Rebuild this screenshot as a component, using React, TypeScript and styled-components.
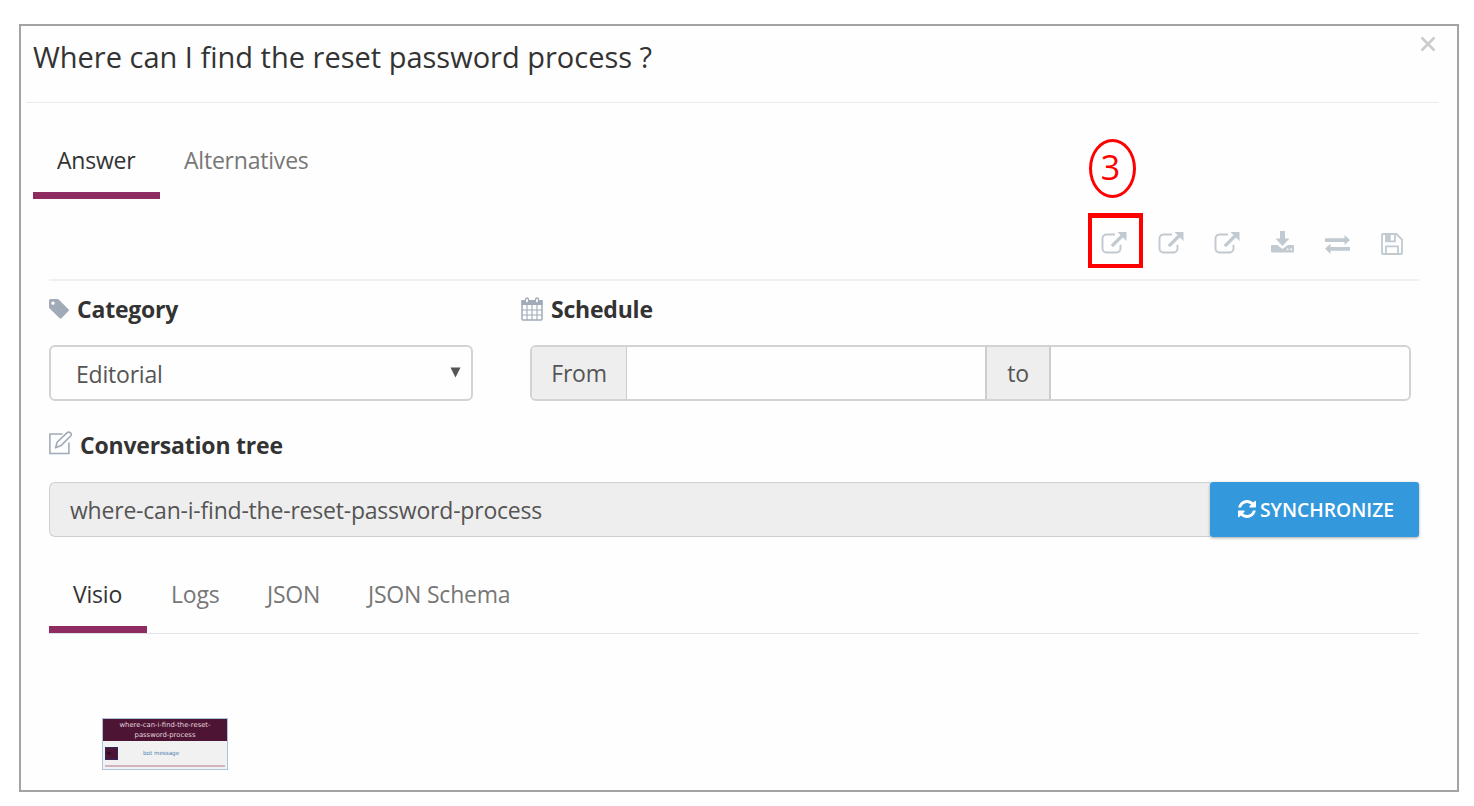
import React from "react";
import styled, { createGlobalStyle } from "styled-components";

const GlobalStyle = createGlobalStyle`
  *, *::before, *::after { box-sizing: border-box; }
  body { margin: 0; background: #fff; font-family: "Open Sans", sans-serif; color: #555; }
`;

const Page = styled.main`
  height: 806px;
  padding: 24px 15px 14px 19px;
  overflow: hidden;
`;

const Dialog = styled.section`
  height: 768px;
  border: 2px solid #a3a3a3;
  background: #fefefe;
`;

const Header = styled.header`
  display: flex;
  justify-content: space-between;
  align-items: flex-start;
  height: 77px;
  margin: 0 18px 0 5px;
  padding: 10px 3px 0 7px;
  border-bottom: 1px solid #ebebeb;
`;

const Title = styled.h1`
  margin: 0;
  font-size: 29px;
  font-weight: 400;
  line-height: 42px;
  color: #333;
  white-space: nowrap;
`;

const CloseButton = styled.button`
  display: flex;
  padding: 0;
  border: 0;
  background: none;
`;

const Body = styled.div`
  padding: 0 38px 0 28px;
  font-size: 23px;
  letter-spacing: -0.21px;
`;

const TabList = styled.nav<{ $main?: boolean }>`
  display: flex;
  align-items: flex-end;
  height: ${(p) => (p.$main ? "96px" : "97px")};
  margin-left: ${(p) => (p.$main ? "-16px" : "0")};
  border-bottom: ${(p) => (p.$main ? "0" : "1px solid #dfe4e9")};
  line-height: ${(p) => (p.$main ? "45px" : "44px")};
`;

const Tab = styled.a<{ $active?: boolean; $width: number }>`
  width: ${(p) => p.$width}px;
  height: 61px;
  padding-left: 24px;
  border-bottom: 7px solid ${(p) => (p.$active ? "#8e2c61" : "transparent")};
  white-space: nowrap;
  color: ${(p) => (p.$active ? "#333" : "#777")};
`;

const Toolbar = styled.div`
  display: flex;
  align-items: flex-start;
  height: 82px;
  padding: 14px 0 0 1039px;
  border-bottom: 2px solid #f0f0f0;
  color: #c1cad0;
`;

const Tool = styled.button<{ $width: number; $top?: number }>`
  display: flex;
  align-items: center;
  justify-content: center;
  flex: none;
  width: ${(p) => p.$width}px;
  height: 55px;
  padding: ${(p) => p.$top ?? 4}px 1px 0 0;
  border: 0;
  background: none;
  color: inherit;
`;

const Highlighted = styled(Tool)`
  position: relative;
  padding-right: 3px;
  border: solid #fe0000;
  border-width: 5px 4px 4px;
`;

const StepBadge = styled.span`
  position: absolute;
  left: -3px;
  top: -79px;
  width: 47px;
  height: 59px;
  padding-right: 4px;
  border: 3px solid #fe0000;
  border-radius: 50%;
  font: 500 34px/51px "Open Sans", sans-serif;
  text-align: center;
  color: #fe0000;
`;

const FieldRow = styled.div`
  display: flex;
`;

const Field = styled.div<{ $width: number }>`
  width: ${(p) => p.$width}px;
`;

const Label = styled.div`
  display: flex;
  align-items: center;
  gap: 8px;
  height: 64px;
  padding-bottom: 8px;
  font-weight: 700;
  line-height: 32px;
  color: #333;
  white-space: nowrap;
  svg { flex: none; }
`;

const TreeLabel = styled(Label)`
  gap: 7px;
  height: 81px;
  padding: 6px 0 0;
  svg { margin-bottom: 3px; }
`;

const Select = styled.div`
  display: flex;
  align-items: center;
  justify-content: space-between;
  width: 424px;
  height: 56px;
  padding: 2px 10px 0 25px;
  border: 2px solid #d3d3d3;
  border-radius: 6px;
  svg { margin-bottom: 4px; }
`;

const InputGroup = styled.div`
  display: flex;
  width: 881px;
  height: 56px;
  margin-left: 9px;
  border: 2px solid #d3d3d3;
  border-radius: 6px;
  overflow: hidden;
`;

const Addon = styled.span<{ $width: number; $between?: boolean }>`
  display: flex;
  align-items: center;
  justify-content: center;
  width: ${(p) => p.$width}px;
  border: solid #cdcdcd;
  border-width: ${(p) => (p.$between ? "0 2px" : "0 1px 0 0")};
  background: #eee;
`;

const Input = styled.input`
  flex: 1;
  min-width: 0;
  padding: 0 20px;
  border: 0;
  background: transparent;
`;

const SyncRow = styled.div`
  display: flex;
  height: 55px;
`;

const TreeName = styled.div`
  flex: 1;
  padding-left: 20px;
  border: solid #cfcfcf;
  border-width: 1px 0 1px 1px;
  border-radius: 6px 0 0 6px;
  background: #eee;
  line-height: 54px;
`;

const SyncButton = styled.button`
  display: flex;
  align-items: center;
  justify-content: center;
  gap: 4px;
  width: 209px;
  padding: 0 0 1px 3px;
  border: 0;
  border-radius: 3px;
  background: #3498dc;
  box-shadow: 0 1px 3px rgba(0, 0, 0, 0.35);
  font: 600 19.3px "Open Sans", sans-serif;
  color: #fff;
`;

const Diagram = styled.div`
  padding: 84px 0 0 53px;
  letter-spacing: 0;
`;

const Node = styled.div`
  width: 126px;
  height: 52px;
  border: 1px solid #a9c4dc;
  background: #f1f1f1;
  font-family: "DejaVu Sans", sans-serif;
`;

const NodeTitle = styled.div`
  height: 22px;
  padding-top: 1px;
  background: #4d1434;
  color: #e4d5de;
  font-size: 6.8px;
  line-height: 10px;
  text-align: center;
`;

const NodeRow = styled.div`
  display: flex;
  align-items: center;
  height: 26px;
  margin: 0 2px;
  border-bottom: 2px solid #d2b4c1;
  font-size: 5.6px;
  color: #4d80b0;
`;

const NodeIcon = styled.span`
  width: 13px;
  height: 13px;
  margin-right: 25px;
  border: 1px solid #33265a;
  background: #4d1434;
  color: #1c0613;
  font-size: 6px;
  line-height: 10px;
`;

const ExternalIcon = () => (
  <svg width="26" height="24" viewBox="0 0 26 24" fill="none">
    <path d="M14 3.500H5.500a4 4 0 0 0-4 4v10a4 4 0 0 0 4 4h10a4 4 0 0 0 4-4v-3.800" stroke="currentColor" strokeWidth="1.900" />
    <path d="M10.800 15.200 21 5" stroke="currentColor" strokeWidth="3.200" />
    <path d="M16.500 1h9v9z" fill="currentColor" />
  </svg>
);

const DownloadIcon = () => (
  <svg width="23" height="22" viewBox="0 0 23 22" fill="currentColor">
    <path d="M9 0h5v7.500h4.500L11.500 15 4.500 7.500H9z" />
    <path fillRule="evenodd" d="M1 14h5.200l5.300 4 5.300-4H22a1 1 0 0 1 1 1v5.500a1 1 0 0 1-1 1H1a1 1 0 0 1-1-1V15a1 1 0 0 1 1-1zm14.800 3.500v1.700h1.700v-1.700zm3.600 0v1.700h1.700v-1.700z" />
  </svg>
);

const ExchangeIcon = () => (
  <svg width="25" height="19" viewBox="0 0 25 19" fill="currentColor">
    <path d="M0 3.300h19.500V0l5.500 5.100-5.500 5V7H0zM25 12H5.500V8.800L0 13.800l5.500 5.100v-3.200H25z" />
  </svg>
);

const SaveIcon = () => (
  <svg width="22" height="22" viewBox="0 0 22 22" fill="none" stroke="currentColor">
    <path d="M2 1h13.500L21 6.500V20a1 1 0 0 1-1 1H2a1 1 0 0 1-1-1V2a1 1 0 0 1 1-1z" strokeWidth="1.800" />
    <path d="M5 21v-7.600h12V21M5 1v7.400h9V1" strokeWidth="1.800" />
    <path d="M5 1h4.700v7.400H5z" fill="currentColor" stroke="none" />
  </svg>
);

const TagIcon = () => (
  <svg width="20" height="20" viewBox="0 0 20 20" fill="#a0abb7">
    <path fillRule="evenodd" d="M1.500 0H8q1.300 0 2.200.9l9.300 9.300q.9.900 0 1.800l-7 7.300q-.9.900-1.800 0L.9 9.800Q0 8.900 0 8V1.500Q0 0 1.500 0zM4 2.400a1.700 1.700 0 1 0 .01 0z" />
  </svg>
);

const CalendarIcon = () => (
  <svg width="22" height="24" viewBox="0 0 22 24" fill="none" stroke="#a0abb7">
    <path d="M1 4h20v18a1 1 0 0 1-1 1H2a1 1 0 0 1-1-1z" strokeWidth="1.500" />
    <path d="M.5 4.500Q.5 3 2 3h18q1.500 0 1.500 1.500V8H.5z" fill="#a0abb7" stroke="none" />
    <path d="M1 13h20M1 18h20M6 8v15M11 8v15M16 8v15" strokeWidth="1.100" />
    <path d="M4.500 2.500a1.500 1.500 0 0 1 3 0v3.300h-3zM14.500 2.500a1.500 1.500 0 0 1 3 0v3.300h-3z" fill="#fff" strokeWidth="1.300" />
  </svg>
);

const EditIcon = () => (
  <svg width="24" height="24" viewBox="0 0 24 24" fill="none" stroke="#a0abb7" strokeWidth="1.600" strokeLinejoin="round">
    <path d="M13.500 3H.9v19.500h19V11.500" />
    <path d="M6.500 16.800 8.300 11 18.200 1.700q1.500-1.300 3.300.1 1.700 1.500.1 3.200L12 14.600z" />
  </svg>
);

const RefreshIcon = () => (
  <svg width="18" height="18" viewBox="0 0 1536 1536" fill="currentColor">
    <path d="M1511 928q0 5-1 7-64 268-268 434.500t-478 166.500q-146 0-282.500-55t-243.500-157l-129 129q-19 19-45 19t-45-19-19-45v-448q0-26 19-45t45-19h448q26 0 45 19t19 45-19 45l-137 137q71 66 161 102t187 36q134 0 250-65t186-179q11-17 53-117 8-23 30-23h192q13 0 22.500 9.500t9.500 22.500zm25-800v448q0 26-19 45t-45 19h-448q-26 0-45-19t-19-45 19-45l138-138q-148-137-349-137-134 0-250 65t-186 179q-11 17-53 117-8 23-30 23h-199q-13 0-22.500-9.500t-9.500-22.500v-7q65-268 270-434.500t480-166.500q146 0 284 55.500t245 156.500l130-129q19-19 45-19t45 19 19 45z" />
  </svg>
);

export default function App() {
  return (
    <Page>
      <GlobalStyle />
      <Dialog>
        <Header>
          <Title>Where can I find the reset password process ?</Title>
          <CloseButton aria-label="Close">
            <svg width="16" height="16" viewBox="0 0 16 16" fill="none" stroke="#cccccc" strokeWidth="2.600">
              <path d="m1.500 1.500 13 13M14.500 1.500l-13 13" />
            </svg>
          </CloseButton>
        </Header>
        <Body>
          <TabList $main>
            <Tab $active $width={127}>Answer</Tab>
            <Tab $width={172}>Alternatives</Tab>
          </TabList>
          <Toolbar>
            <Highlighted $width={55} $top={3} aria-label="Open">
              <ExternalIcon />
              <StepBadge>3</StepBadge>
            </Highlighted>
            <Tool $width={56} aria-label="Open"><ExternalIcon /></Tool>
            <Tool $width={56} aria-label="Open"><ExternalIcon /></Tool>
            <Tool $width={55} $top={3} aria-label="Download"><DownloadIcon /></Tool>
            <Tool $width={56} $top={8} aria-label="Exchange"><ExchangeIcon /></Tool>
            <Tool $width={53} $top={7} aria-label="Save"><SaveIcon /></Tool>
          </Toolbar>
          <FieldRow>
            <Field $width={472}>
              <Label><TagIcon />Category</Label>
              <Select>
                Editorial
                <svg width="11" height="11" viewBox="0 0 11 11" fill="#555"><path d="M.5.5h10l-5 10z" /></svg>
              </Select>
            </Field>
            <Field $width={890}>
              <Label><CalendarIcon />Schedule</Label>
              <InputGroup>
                <Addon $width={95}>From</Addon>
                <Input aria-label="From" />
                <Addon $width={66} $between>to</Addon>
                <Input aria-label="To" />
              </InputGroup>
            </Field>
          </FieldRow>
          <TreeLabel><EditIcon />Conversation tree</TreeLabel>
          <SyncRow>
            <TreeName>where-can-i-find-the-reset-password-process</TreeName>
            <SyncButton><RefreshIcon />SYNCHRONIZE</SyncButton>
          </SyncRow>
          <TabList>
            <Tab $active $width={98}>Visio</Tab>
            <Tab $width={96}>Logs</Tab>
            <Tab $width={101}>JSON</Tab>
            <Tab $width={190}>JSON Schema</Tab>
          </TabList>
          <Diagram>
            <Node>
              <NodeTitle>where-can-i-find-the-reset-<br />password-process</NodeTitle>
              <NodeRow><NodeIcon>➔</NodeIcon>bot message</NodeRow>
            </Node>
          </Diagram>
        </Body>
      </Dialog>
    </Page>
  );
}
